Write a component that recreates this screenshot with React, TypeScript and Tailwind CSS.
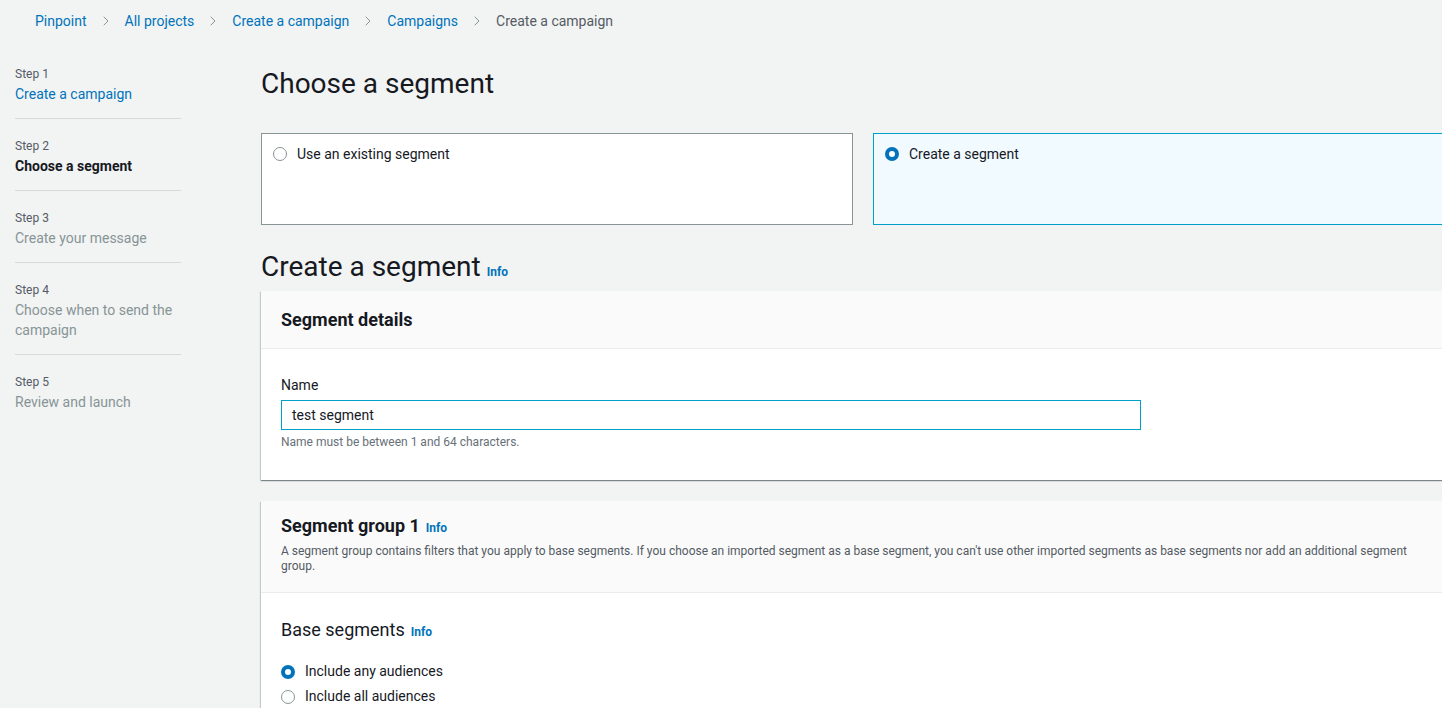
import { ChevronRight } from "lucide-react";

const font = { fontFamily: "Roboto, 'Noto Sans', sans-serif" };

const crumbs = ["Pinpoint", "All projects", "Create a campaign", "Campaigns"];

const steps = [
  { step: "Step 1", label: "Create a campaign", state: "done" },
  { step: "Step 2", label: "Choose a segment", state: "current" },
  { step: "Step 3", label: "Create your message", state: "todo" },
  { step: "Step 4", label: "Choose when to send the campaign", state: "todo" },
  { step: "Step 5", label: "Review and launch", state: "todo" },
];

function Radio({ checked }: { checked?: boolean }) {
  return checked ? (
    <span className="inline-block h-[14px] w-[14px] shrink-0 rounded-full border-[4px] border-[#0073bb] bg-white" />
  ) : (
    <span className="inline-block h-[14px] w-[14px] shrink-0 rounded-full border border-[#879596] bg-white" />
  );
}

function Info() {
  return <span className="ml-[6px] text-[12px] font-bold text-[#0073bb]">Info</span>;
}

const cardShadow =
  "shadow-[0_1px_1px_0_rgba(0,28,36,0.3),1px_1px_1px_0_rgba(0,28,36,0.15),-1px_1px_1px_0_rgba(0,28,36,0.15)]";

export default function App() {
  return (
    <div
      className="h-[708px] w-[1442px] overflow-hidden bg-[#f2f3f3] text-[#16191f]"
      style={font}
    >
      {/* breadcrumbs */}
      <nav className="flex h-[42px] items-center pl-[35px] text-[14px]">
        {crumbs.map((c) => (
          <span key={c} className="flex items-center">
            <span className="text-[#0073bb]">{c}</span>
            <ChevronRight className="mx-[11px] h-[16px] w-[16px] text-[#879596]" strokeWidth={1.5} />
          </span>
        ))}
        <span className="text-[#545b64]">Create a campaign</span>
      </nav>

      <div className="flex">
        {/* wizard steps */}
        <aside className="w-[261px] shrink-0 pl-[15px] pt-[24px]">
          <ul className="w-[166px]">
            {steps.map((s, i) => (
              <li
                key={s.step}
                className={`pb-[14px] ${i > 0 ? "pt-[19px]" : ""} ${
                  i < steps.length - 1 ? "border-b border-[#d5dbdb]" : ""
                }`}
              >
                <div className="text-[12px] leading-[16px] text-[#545b64]">{s.step}</div>
                <div
                  className={`mt-[2px] text-[14px] leading-[20px] ${
                    s.state === "done"
                      ? "text-[#0073bb]"
                      : s.state === "current"
                        ? "font-bold text-[#16191f]"
                        : "text-[#879596]"
                  }`}
                >
                  {s.label}
                </div>
              </li>
            ))}
          </ul>
        </aside>

        {/* main */}
        <main className="w-[1204px] shrink-0">
          <h1 className="mt-[24px] text-[28px] leading-[36px]">Choose a segment</h1>

          <div className="mt-[31px] grid grid-cols-2 gap-[20px]">
            <div className="flex h-[92px] items-start gap-[10px] border border-[#879596] bg-white px-[11px] pt-[10px] text-[14px]">
              <span className="mt-[2px]">
                <Radio />
              </span>
              <span>Use an existing segment</span>
            </div>
            <div className="flex h-[92px] items-start gap-[10px] border border-[#00a1c9] bg-[#f1faff] px-[11px] pt-[10px] text-[14px]">
              <span className="mt-[2px]">
                <Radio checked />
              </span>
              <span>Create a segment</span>
            </div>
          </div>

          <h2 className="mt-[24px] flex items-baseline text-[28px] leading-[36px]">
            Create a segment
            <Info />
          </h2>

          {/* segment details */}
          <section className={`mt-[1px] bg-white ${cardShadow}`}>
            <div className="flex h-[58px] items-center border-b border-[#eaeded] bg-[#fafafa] px-[20px]">
              <h3 className="text-[18px] font-bold">Segment details</h3>
            </div>
            <div className="px-[20px] pb-[30px] pt-[26px]">
              <label className="block text-[14px] leading-[20px]">Name</label>
              <div className="mt-[5px] flex h-[30px] w-[860px] items-center border border-[#00a1c9] px-[10px] text-[14px]">
                test segment
              </div>
              <p className="mt-[4px] text-[12px] leading-[16px] text-[#687078]">
                Name must be between 1 and 64 characters.
              </p>
            </div>
          </section>

          {/* segment group */}
          <section className={`mt-[21px] bg-white ${cardShadow}`}>
            <div className="border-b border-[#eaeded] bg-[#fafafa] px-[20px] pb-[18px] pt-[13px]">
              <h3 className="flex items-baseline text-[18px] font-bold leading-[24px]">
                Segment group 1
                <Info />
              </h3>
              <p className="mt-[4px] w-[1150px] text-[12px] leading-[15px] text-[#545b64]">
                A segment group contains filters that you apply to base segments. If you choose an
                imported segment as a base segment, you can't use other imported segments as base
                segments nor add an additional segment group.
              </p>
            </div>
            <div className="px-[20px] pb-[40px] pt-[25px]">
              <h4 className="flex items-baseline text-[18px] leading-[24px]">
                Base segments
                <Info />
              </h4>
              <div className="mt-[17px] flex flex-col gap-[4px] text-[14px]">
                <label className="flex items-center gap-[10px]">
                  <Radio checked />
                  Include any audiences
                </label>
                <label className="flex items-center gap-[10px]">
                  <Radio />
                  Include all audiences
                </label>
              </div>
            </div>
          </section>
        </main>
      </div>
    </div>
  );
}
